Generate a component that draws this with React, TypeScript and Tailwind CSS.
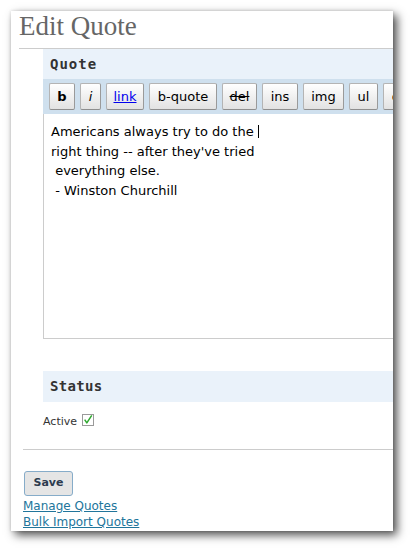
import React from "react";

const sans = "font-['DejaVu_Sans',Verdana,sans-serif]";

function ToolButton({ children, className = "" }: { children: React.ReactNode; className?: string }) {
  return (
    <span
      className={`inline-flex h-[27px] shrink-0 items-center justify-center rounded-[2px] border border-[#b4b4b4] border-b-[#8e8e8e] border-r-[#9a9a9a] bg-gradient-to-b from-white to-[#e2e2e2] text-[13px] text-black ${sans} ${className}`}
    >
      {children}
    </span>
  );
}

export default function App() {
  return (
    <div className="min-h-[550px] bg-white pl-[11px] pt-[11px]">
      <div className="h-[520px] w-[382px] overflow-hidden bg-white shadow-[4px_4px_9px_rgba(0,0,0,0.7),0_0_3px_rgba(0,0,0,0.15)]">
        <h2 className="pl-[8px] font-['Liberation_Serif',serif] text-[27px] font-normal leading-[31px] text-[#666]">
          Edit Quote
        </h2>
        <div className="ml-[8px] mt-[6px] h-px bg-[#cccccc]" />

        <div className="ml-[32px] w-[420px]">
          <div className="flex h-[30px] items-center bg-[#eaf2fa] pl-[7px] font-['DejaVu_Sans_Mono',monospace] text-[14px] font-bold tracking-[1px] text-[#333]">
            Quote
          </div>
          <div className="flex h-[35px] items-center gap-[5px] whitespace-nowrap bg-[#cfe0ee] pl-[6px]">
            <ToolButton className="w-[26px] font-bold">b</ToolButton>
            <ToolButton className="w-[21px] italic">i</ToolButton>
            <ToolButton className="w-[38px]">
              <span className="text-[#0000ee] underline">link</span>
            </ToolButton>
            <ToolButton className="w-[68px]">b-quote</ToolButton>
            <ToolButton className="w-[35px]">
              <span className="line-through">del</span>
            </ToolButton>
            <ToolButton className="w-[36px]">ins</ToolButton>
            <ToolButton className="w-[41px]">img</ToolButton>
            <ToolButton className="w-[29px]">ul</ToolButton>
            <ToolButton className="w-[29px]">ol</ToolButton>
            <ToolButton className="w-[26px]">li</ToolButton>
          </div>
          <div
            className={`h-[225px] whitespace-pre border-b border-l border-[#cccccc] pl-[7px] pt-[8px] text-[13px] leading-[19.5px] text-black ${sans}`}
          >
            {"Americans always try to do the "}
            <span className="inline-block h-[13px] w-px translate-y-[2px] bg-black align-baseline" />
            {"\nright thing -- after they've tried\n everything else.\n - Winston Churchill"}
          </div>

          <div className="mt-[32px] flex h-[31px] items-center bg-[#eaf2fa] pl-[7px] font-['DejaVu_Sans_Mono',monospace] text-[14px] font-bold tracking-[0.3px] text-[#333]">
            Status
          </div>
          <div className={`mt-[13px] flex h-[14px] items-start gap-[5px] text-[11px] leading-[14px] text-[#333] ${sans}`}>
            <span>Active</span>
            <span className="mt-[-1px] flex h-[12px] w-[12px] items-center justify-center border border-[#9a9a9a] bg-white">
              <svg width="12" height="12" viewBox="0 0 12 12">
                <path d="M2 5.5 L4.6 9.5 L10.5 0.5" fill="none" stroke="#2fa82f" strokeWidth="1.8" strokeLinejoin="round" />
              </svg>
            </span>
          </div>
        </div>

        <div className="ml-[12px] mt-[20px] h-px bg-[#cccccc]" />

        <div className="ml-[13px] mt-[21px]">
          <button
            className={`flex h-[25px] w-[49px] items-center justify-center rounded-[3px] border border-[#86acc9] bg-[#e5e5e5] text-[11px] font-bold text-[#2c3b4e] ${sans}`}
          >
            Save
          </button>
        </div>
        <div className={`ml-[12px] mt-[2px] flex flex-col text-[12px] leading-[16px] ${sans}`}>
          <a className="self-start text-[#21759b] underline">Manage Quotes</a>
          <a className="self-start text-[#21759b] underline">Bulk Import Quotes</a>
        </div>
      </div>
    </div>
  );
}
